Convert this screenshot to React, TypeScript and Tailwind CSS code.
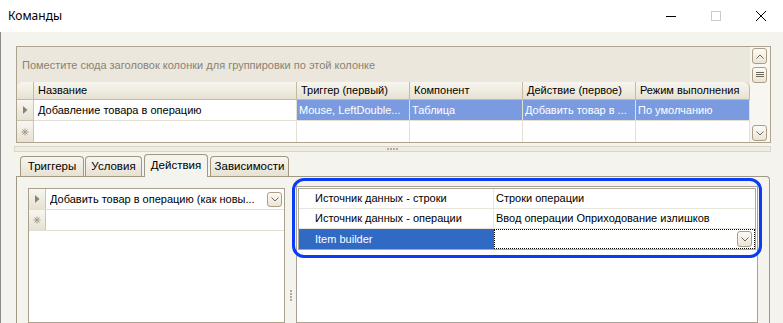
import React from "react";

const headBg = "bg-linear-to-b from-[#f8f6f0] to-[#e7e1d2]";

function Chevron({ up = false }: { up?: boolean }) {
  return (
    <svg width="8" height="5" viewBox="0 0 8 5">
      <polyline
        points={up ? "0.5,4.5 4,1 7.5,4.5" : "0.5,0.5 4,4 7.5,0.5"}
        fill="none"
        stroke="#6f6757"
        strokeWidth="1"
      />
    </svg>
  );
}

function Lines() {
  return (
    <svg width="8" height="6" viewBox="0 0 8 6">
      <path d="M0 0.5H8M0 2.5H8M0 4.5H8" stroke="#6f6757" strokeWidth="1" />
    </svg>
  );
}

function SmallBtn({ children, h = 16 }: { children: React.ReactNode; h?: number }) {
  return (
    <div
      className={`flex w-[15px] shrink-0 items-center justify-center rounded-[3px] border border-[#ab9f88] bg-linear-to-b from-[#fcfbf7] to-[#e9e4d6] ${
        h === 16 ? "h-[16px]" : "h-[15px]"
      }`}
    >
      {children}
    </div>
  );
}

function RowMark() {
  return (
    <svg width="5" height="8" viewBox="0 0 5 8">
      <path d="M0 0L4.5 4L0 8Z" fill="#8a8272" />
    </svg>
  );
}

function NewMark() {
  return (
    <svg width="8" height="8" viewBox="0 0 8 8">
      <path
        d="M4 0.5V7.5M0.5 4H7.5M1.5 1.5L6.5 6.5M6.5 1.5L1.5 6.5"
        stroke="#a59c8c"
        strokeWidth="1"
      />
    </svg>
  );
}

const cols = [
  { title: "Триггер (первый)", w: "w-[113px]", value: "Mouse, LeftDouble..." },
  { title: "Компонент", w: "w-[113px]", value: "Таблица" },
  { title: "Действие (первое)", w: "w-[113px]", value: "Добавить товар в ..." },
  { title: "Режим выполнения", w: "w-[114px]", value: "По умолчанию" },
];

function TopGrid() {
  return (
    <div className="flex h-[97px] shrink-0 border border-[#aca48f] bg-white">
      <div className="flex w-[733px] flex-col">
        <div className="flex h-[35px] items-center bg-[#ebe7dc] pl-[5px] pt-[1px] text-[#8a8272]">
          Поместите сюда заголовок колонки для группировки по этой колонке
        </div>
        <div className="flex h-[18px] bg-[#ebe7dc]">
          <div className={`w-[17px] rounded-tl-[6px] border-r border-b border-[#c4bba7] ${headBg}`} />
          <div className={`flex w-[263px] items-center border-r border-b border-[#c4bba7] pl-[4px] ${headBg}`}>
            Название
          </div>
          {cols.map((c, i) => (
            <div
              key={c.title}
              className={`flex ${c.w} items-center border-b border-[#c4bba7] pl-[4px] ${headBg} ${
                i === cols.length - 1 ? "rounded-tr-[6px] border-r" : "border-r"
              }`}
            >
              {c.title}
            </div>
          ))}
        </div>
        <div className="flex h-[21px]">
          <div className={`flex w-[17px] items-center justify-center border-r border-b border-[#cbc4b2] ${headBg}`}>
            <RowMark />
          </div>
          <div className="flex w-[263px] items-center border-r border-b border-[#e3dfd3] pl-[4px]">
            Добавление товара в операцию
          </div>
          {cols.map((c) => (
            <div
              key={c.title}
              className={`flex ${c.w} items-center overflow-hidden whitespace-nowrap border-r border-b border-[#e3dfd3] bg-[#7b9be0] pl-[2px] text-white`}
            >
              {c.value}
            </div>
          ))}
        </div>
        <div className="flex h-[21px]">
          <div className={`flex w-[17px] items-center justify-center border-r border-[#cbc4b2] ${headBg}`}>
            <NewMark />
          </div>
          <div className="w-[263px] border-r border-[#e3dfd3]" />
          {cols.map((c) => (
            <div key={c.title} className={`${c.w} border-r border-[#e3dfd3]`} />
          ))}
        </div>
      </div>
      <div className="flex w-[20px] flex-col bg-[#f7f6f1] pl-[2px] pt-[1px] pb-[1px]">
        <SmallBtn>
          <Chevron up />
        </SmallBtn>
        <div className="mt-[3px]">
          <SmallBtn>
            <Lines />
          </SmallBtn>
        </div>
        <div className="mt-auto">
          <SmallBtn>
            <Chevron />
          </SmallBtn>
        </div>
      </div>
    </div>
  );
}

function Dots({ vertical = false }: { vertical?: boolean }) {
  return (
    <div className={`flex gap-[1px] ${vertical ? "flex-col" : "flex-row"}`}>
      {[0, 1, 2, 3].map((i) => (
        <div key={i} className="h-[2px] w-[2px] bg-[#b4ab98]" />
      ))}
    </div>
  );
}

const tabs = [
  { t: "Триггеры", w: "w-[64px]", ml: "ml-0" },
  { t: "Условия", w: "w-[57px]", ml: "ml-[1px]" },
  { t: "Действия", w: "w-[64px]", ml: "ml-[2px]", active: true },
  { t: "Зависимости", w: "w-[79px]", ml: "ml-[2px]" },
];

const props = [
  { k: "Источник данных - строки", v: "Строки операции" },
  { k: "Источник данных - операции", v: "Ввод операции Оприходование излишков" },
];

export default function App() {
  return (
    <div className="relative h-[323px] w-[783px] overflow-hidden bg-white font-['Liberation_Sans',sans-serif] text-[11px] leading-none text-black">
      <div className="flex h-[32px] items-center justify-between bg-white">
        <span className="pl-[8px] font-['Noto_Sans',sans-serif] text-[12px]">Команды</span>
        <div className="flex h-full">
          <div className="flex w-[45px] items-center justify-center">
            <div className="h-px w-[10px] bg-black" />
          </div>
          <div className="flex w-[45px] items-center justify-center">
            <div className="h-[10px] w-[10px] border border-[#cccccc]" />
          </div>
          <div className="flex w-[45px] items-center justify-center">
            <svg width="10" height="10" viewBox="0 0 10 10">
              <path d="M0 0L10 10M10 0L0 10" stroke="#000" strokeWidth="1" />
            </svg>
          </div>
        </div>
      </div>

      <div className="flex h-[291px] flex-col border-l border-[#8c8c8c] bg-[#f4f3ee] pl-[15px] pr-[12px] pt-[14px]">
        <TopGrid />

        <div className="-ml-[2px] mt-[3px] flex h-[6px] shrink-0 items-center justify-center border border-[#dcd6c7] bg-[#efece3]">
          <Dots />
        </div>

        <div className="mt-[2px] flex h-[22px] shrink-0 items-end pl-[4px]">
          {tabs.map((tb) => (
            <div
              key={tb.t}
              className={`${tb.w} ${tb.ml} flex items-center justify-center rounded-t-[4px] border border-[#a09883] text-[11.5px] ${
                tb.active
                  ? "relative z-10 -mb-px h-[23px] border-b-0 bg-[#f4f3ee] pb-[1px]"
                  : `h-[20px] border-b-0 ${headBg}`
              }`}
            >
              {tb.t}
            </div>
          ))}
        </div>

        <div className="mr-[1px] flex flex-1 rounded-tr-[4px] border border-b-0 border-[#a09883] bg-[#f4f3ee] pl-[11px] pr-[11px] pt-[9px]">
          <div className="mt-[2px] flex w-[257px] shrink-0 flex-col border border-[#aaa18d] bg-white">
            <div className="flex h-[21px] border-b border-[#e3dfd3]">
              <div className={`flex w-[17px] shrink-0 items-center justify-center border-r border-[#cbc4b2] ${headBg}`}>
                <RowMark />
              </div>
              <div className="flex min-w-0 flex-1 items-center justify-between pl-[4px] pr-[2px]">
                <span className="overflow-hidden whitespace-nowrap">Добавить товар в операцию (как новы...</span>
                <SmallBtn h={15}>
                  <Chevron />
                </SmallBtn>
              </div>
            </div>
            <div className="flex h-[21px] border-b border-[#e3dfd3]">
              <div className={`flex w-[17px] items-center justify-center border-r border-[#cbc4b2] ${headBg}`}>
                <NewMark />
              </div>
            </div>
          </div>

          <div className="flex w-[11px] shrink-0 justify-center pt-[104px]">
            <Dots vertical />
          </div>

          <div className="flex-1 border border-[#a9a197] bg-white p-[1px]">
            <div className="flex flex-col border border-[#aca899]">
              {props.map((p) => (
                <div key={p.k} className="flex h-[20px] border-b border-[#e8e5dc]">
                  <div className="flex w-[195px] items-center border-r border-[#e8e5dc] pl-[16px]">{p.k}</div>
                  <div className="flex flex-1 items-center pl-[2px]">{p.v}</div>
                </div>
              ))}
              <div className="flex h-[20px]">
                <div className="flex w-[195px] items-center bg-[#316ac5] pl-[16px] text-white">Item builder</div>
                <div className="flex flex-1 items-center justify-end border border-dotted border-black pr-[2px]">
                  <SmallBtn>
                    <Chevron />
                  </SmallBtn>
                </div>
              </div>
            </div>
          </div>
        </div>
      </div>

      <div className="pointer-events-none absolute left-[292px] top-[178px] h-[80px] w-[470px] rounded-[12px] border-[3px] border-[#0b3cf5]" />
    </div>
  );
}
